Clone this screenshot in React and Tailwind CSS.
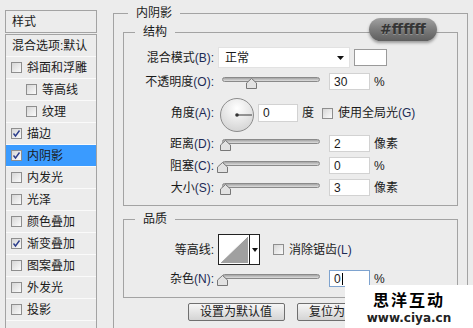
import React from "react";

const styleItems = [
  { label: "斜面和浮雕", checked: false },
  { label: "等高线", checked: false, indent: true },
  { label: "纹理", checked: false, indent: true },
  { label: "描边", checked: true },
  { label: "内阴影", checked: true, active: true },
  { label: "内发光", checked: false },
  { label: "光泽", checked: false },
  { label: "颜色叠加", checked: false },
  { label: "渐变叠加", checked: true },
  { label: "图案叠加", checked: false },
  { label: "外发光", checked: false },
  { label: "投影", checked: false },
];

function Check({ checked }) {
  return (
    <span className="flex h-[11px] w-[11px] shrink-0 items-center justify-center border border-[#8e8e8e] bg-gradient-to-br from-[#d6d6d6] to-[#fbfbfb]">
      {checked && (
        <svg width="9" height="9" viewBox="0 0 9 9">
          <path d="M1.5 4.5 L3.5 7 L7.5 1.5" fill="none" stroke="#2b3d8c" strokeWidth="1.4" />
        </svg>
      )}
    </span>
  );
}

function Slider({ thumb }) {
  return (
    <div className="relative mt-[3px] h-[12px] w-[98px] shrink-0">
      <div className="h-[5px] rounded-full border border-[#8a8a8a] bg-gradient-to-b from-[#a4a4a4] to-[#dedede]" />
      <svg className={`absolute top-[1px] ${thumb}`} width="11" height="11" viewBox="0 0 11 11">
        <path d="M5.5 0.5 L10.5 5 V10.5 H0.5 V5 Z" fill="#e2e2e2" stroke="#777777" />
      </svg>
    </div>
  );
}

function Field({ value, focus, className = "w-[41px] h-[17px]" }) {
  return (
    <div
      className={`flex shrink-0 items-center border bg-white pl-[4px] leading-none ${
        focus ? "border-[#7ea3cf]" : "border-[#d2d2d2]"
      } ${className}`}
    >
      {value}
      {focus && <span className="ml-px h-[12px] w-px bg-black" />}
    </div>
  );
}

function Label({ text, hint }) {
  return (
    <div className="w-[90px] shrink-0 text-right">
      {text}
      <span className="text-[#1c2a55]">({hint}):</span>
    </div>
  );
}

function Legend({ children, indent }) {
  return <legend className={`px-[8px] leading-[18px] ${indent}`}>{children}</legend>;
}

function Dial() {
  return (
    <svg className="mt-[4px] ml-[6px] shrink-0" width="34" height="34" viewBox="0 0 34 34">
      <defs>
        <radialGradient id="dialFill" cx="50%" cy="30%" r="70%">
          <stop offset="0%" stopColor="#ffffff" />
          <stop offset="100%" stopColor="#d4d4d4" />
        </radialGradient>
      </defs>
      <circle cx="17" cy="17" r="16.5" fill="url(#dialFill)" stroke="#8c8c8c" />
      <line x1="17" y1="17" x2="32" y2="17" stroke="#555555" strokeWidth="1.2" />
      <circle cx="17" cy="17" r="1.8" fill="#333333" />
    </svg>
  );
}

function Contour() {
  return (
    <div className="ml-[4px] flex h-[31px] w-[42px] shrink-0 border border-[#222222] bg-white">
      <svg width="30" height="29" viewBox="0 0 30 29">
        <path d="M1 28 L29 1 V28 Z" fill="#a0a0a0" />
        <path d="M1 28 L29 1" stroke="#ffffff" strokeWidth="1" />
      </svg>
      <div className="flex flex-1 items-center justify-center border-l border-[#222222]">
        <svg width="6" height="4" viewBox="0 0 6 4">
          <path d="M0 0 H6 L3 4 Z" fill="#111111" />
        </svg>
      </div>
    </div>
  );
}

function LeftPanel() {
  return (
    <div className="ml-[5px] mt-[10px] w-[92px] shrink-0">
      <div className="flex h-[23px] items-center border border-[#a3a3a3] pl-[6px]">样式</div>
      <div className="mt-[1px] h-[300px] border border-[#a3a3a3]">
        <div className="flex h-[22px] items-center border-b border-[#fafafa] pl-[6px]">混合选项:默认</div>
        {styleItems.map((item) => (
          <div
            key={item.label}
            className={`flex h-[22px] items-center gap-[5px] border-b border-[#fafafa] ${
              item.indent ? "pl-[20px]" : "pl-[5px]"
            } ${item.active ? "bg-[#3a9bff]" : ""}`}
          >
            <Check checked={item.checked} />
            <span>{item.label}</span>
          </div>
        ))}
      </div>
    </div>
  );
}

function Button({ children }) {
  return (
    <div className="flex h-[18px] w-[97px] items-center justify-center rounded-[2px] border border-[#6f6f6f] bg-gradient-to-b from-[#f6f6f6] to-[#d4d4d4]">
      {children}
    </div>
  );
}

export default function App() {
  return (
    <div className="relative h-[328px] w-[473px] overflow-hidden bg-[#ececec] font-['Liberation_Sans','Noto_Sans_CJK_SC',sans-serif] text-[12px] text-[#1a1a1a]">
      <div className="flex items-start">
        <LeftPanel />

        <fieldset className="ml-[16px] mt-[4px] h-[340px] w-[355px] min-w-0 border border-[#a3a3a3]">
          <Legend indent="ml-[14px]">内阴影</Legend>

          <fieldset className="mx-[9px] mt-[1px] min-w-0 border border-[#a3a3a3] pt-[5px] pb-[6px]">
            <Legend indent="ml-[11px]">结构</Legend>

            <div className="flex h-[23px] items-center">
              <Label text="混合模式" hint="B" />
              <div className="ml-[4px] flex h-[21px] w-[132px] items-center justify-between border border-[#e2e2e2] bg-white pl-[6px] pr-[5px]">
                <span>正常</span>
                <svg width="7" height="4" viewBox="0 0 7 4">
                  <path d="M0 0 H7 L3.5 4 Z" fill="#111111" />
                </svg>
              </div>
              <div className="ml-[4px] h-[17px] w-[33px] border border-[#9a9a9a] bg-white" />
            </div>

            <div className="flex h-[25px] items-center">
              <Label text="不透明度" hint="O" />
              <div className="ml-[8px]">
                <Slider thumb="left-[24px]" />
              </div>
              <Field value="30" className="ml-[9px] h-[17px] w-[41px]" />
              <span className="ml-[4px]">%</span>
            </div>

            <div className="flex h-[38px] items-center">
              <Label text="角度" hint="A" />
              <Dial />
              <Field value="0" className="ml-[4px] h-[18px] w-[40px]" />
              <span className="ml-[4px]">度</span>
              <span className="ml-[8px]">
                <Check checked={false} />
              </span>
              <span className="ml-[5px]">
                使用全局光<span className="text-[#1c2a55]">(G)</span>
              </span>
            </div>

            <div className="flex h-[23px] items-center">
              <Label text="距离" hint="D" />
              <div className="ml-[8px]">
                <Slider thumb="left-[-2px]" />
              </div>
              <Field value="2" className="ml-[9px] h-[17px] w-[41px]" />
              <span className="ml-[4px]">像素</span>
            </div>

            <div className="flex h-[21px] items-center">
              <Label text="阻塞" hint="C" />
              <div className="ml-[8px]">
                <Slider thumb="left-[-5px]" />
              </div>
              <Field value="0" className="ml-[9px] h-[17px] w-[41px]" />
              <span className="ml-[4px]">%</span>
            </div>

            <div className="flex h-[23px] items-center">
              <Label text="大小" hint="S" />
              <div className="ml-[8px]">
                <Slider thumb="left-[-2px]" />
              </div>
              <Field value="3" className="ml-[9px] h-[17px] w-[41px]" />
              <span className="ml-[4px]">像素</span>
            </div>
          </fieldset>

          <fieldset className="mx-[9px] mt-[4px] min-w-0 border border-[#a3a3a3] pt-[6px] pb-[10px]">
            <Legend indent="ml-[11px]">品质</Legend>

            <div className="flex h-[31px] items-center">
              <div className="w-[90px] shrink-0 text-right">等高线:</div>
              <Contour />
              <span className="ml-[13px]">
                <Check checked={false} />
              </span>
              <span className="ml-[5px]">
                消除锯齿<span className="text-[#1c2a55]">(L)</span>
              </span>
            </div>

            <div className="mt-[5px] flex h-[17px] items-center">
              <Label text="杂色" hint="N" />
              <div className="ml-[8px]">
                <Slider thumb="left-[-5px]" />
              </div>
              <Field value="0" focus className="ml-[9px] h-[17px] w-[41px]" />
              <span className="ml-[4px]">%</span>
            </div>
          </fieldset>

          <div className="mt-[5px] flex justify-center gap-[12px]">
            <Button>设置为默认值</Button>
            <Button>复位为默认值</Button>
          </div>
        </fieldset>
      </div>

      <div className="absolute left-[369px] top-[18px] flex h-[23px] w-[68px] items-center justify-center rounded-full bg-gradient-to-b from-[#a2a2a2] via-[#7c7c7c] to-[#5e5e5e] font-['DejaVu_Sans',sans-serif] text-[14px] font-bold text-[#353535] shadow-[0_2px_3px_rgba(0,0,0,0.35)] [text-shadow:0_1px_0_rgba(255,255,255,0.25)]">
        #ffffff
      </div>

      <div className="absolute bottom-0 right-0 flex h-[43px] w-[128px] flex-col items-center justify-center bg-white">
        <span className="font-['Noto_Sans_CJK_SC',sans-serif] text-[16px] font-bold leading-[23px] tracking-[2px] text-black">
          思洋互动
        </span>
        <span className="font-['DejaVu_Sans',sans-serif] text-[12px] font-bold leading-[15px] text-[#222222]">
          www.ciya.cn
        </span>
      </div>
    </div>
  );
}
